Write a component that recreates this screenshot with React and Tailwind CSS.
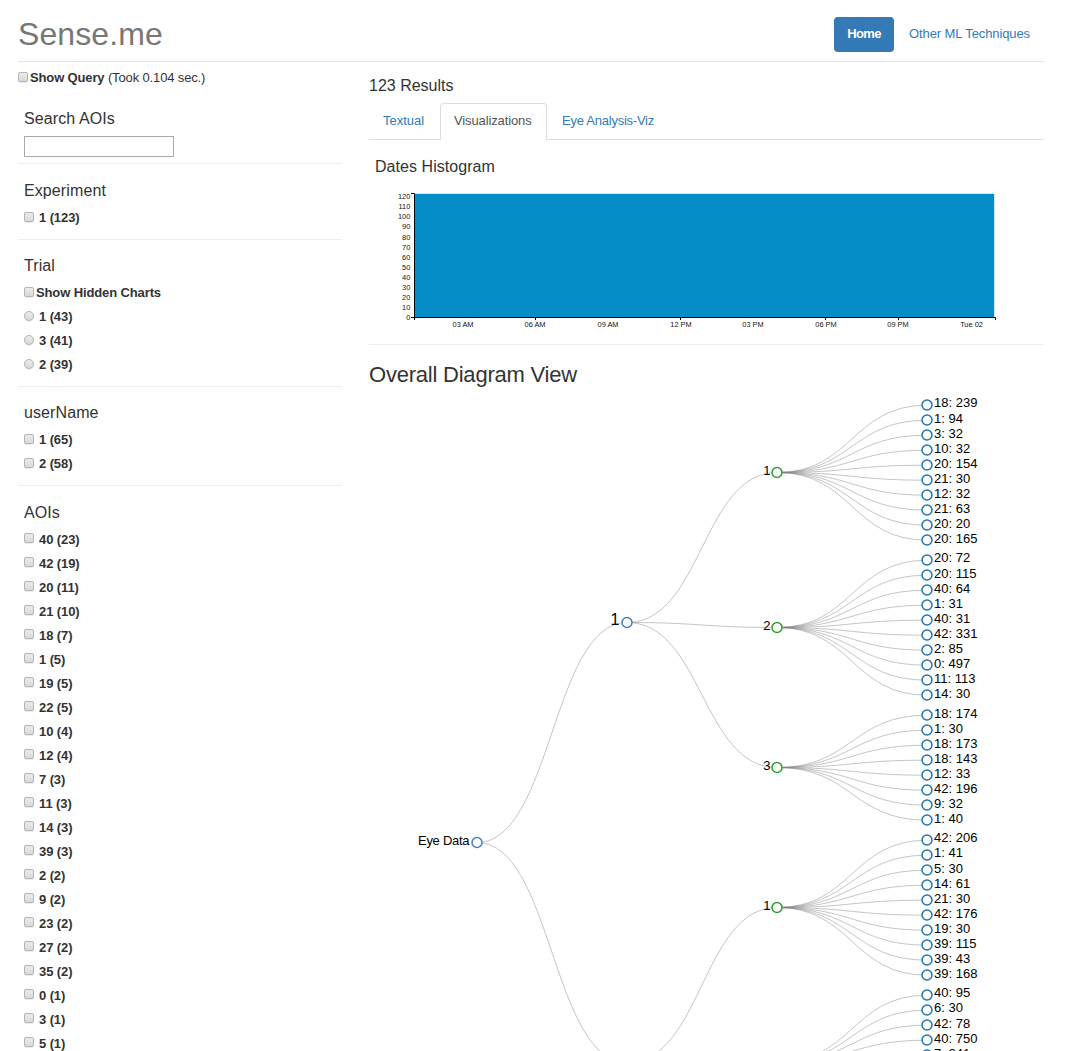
import React from "react";

const BOX =
  "w-[10px] h-[10px] shrink-0 border border-[#b4b4b4] bg-gradient-to-b from-[#ececec] to-[#d9d9d9] shadow-[0_1px_0_rgba(0,0,0,0.08)]";

function Mark({ radio }) {
  return <span className={radio ? BOX + " rounded-full" : BOX + " rounded-[2px]"} />;
}

function Option({ label, radio, labelTop }) {
  return (
    <label className="flex h-6 items-start font-bold leading-[18px] tracking-[-0.1px]">
      <span className="mt-[3px] flex"><Mark radio={radio} /></span>
      <span className={"ml-[5px] " + labelTop}>{label}</span>
    </label>
  );
}

function Heading({ children }) {
  return <h4 className="text-[16px] leading-[18px] tracking-[0.1px]">{children}</h4>;
}

function Facet({ title, items, radio, height, padding, gap = "mt-[9px]", labelTop = "mt-0", children }) {
  return (
    <section className={"border-b border-[#eeeeee] pl-[6px] " + height + " " + padding}>
      <Heading>{title}</Heading>
      <div className={gap}>
        {children}
        {items.map((t) => <Option key={t} label={t} radio={radio} labelTop={labelTop} />)}
      </div>
    </section>
  );
}

const AOIS = ["40 (23)", "42 (19)", "20 (11)", "21 (10)", "18 (7)", "1 (5)", "19 (5)", "22 (5)", "10 (4)", "12 (4)", "7 (3)", "11 (3)", "14 (3)", "39 (3)", "2 (2)", "9 (2)", "23 (2)", "27 (2)", "35 (2)", "0 (1)", "3 (1)", "5 (1)"];

function Histogram() {
  const ys = [317, 307, 297, 287, 277, 267, 257, 247, 237, 226, 216, 206, 196];
  const xs = [[463, "03 AM"], [535, "06 AM"], [608, "09 AM"], [681, "12 PM"], [753, "03 PM"], [826, "06 PM"], [898, "09 PM"], [971.5, "Tue 02"]];
  return (
    <svg className="block" width="675" height="158" viewBox="369 186 675 158" fontSize="7.4" fill="#111">
      <rect x="415" y="194" width="579" height="123" fill="#058dc7" />
      <path d="M994.5 194V317M415 193.5H994" stroke="#cfe8f4" fill="none" />
      <path d="M411 193.5H414.5V317.5H411" stroke="#000" fill="none" />
      <path d="M414.5 320V317.5H995.5V320M535.5 317V320M680.5 317V320M825.5 317V320M898.5 317V320" stroke="#000" fill="none" />
      {ys.map((y, i) => <text key={y} x="410.3" y={y + 2.6} textAnchor="end">{i * 10}</text>)}
      {xs.map(([x, t]) => <text key={t} x={x} y="327" textAnchor="middle">{t}</text>)}
    </svg>
  );
}

const GROUPS = [
  { y: 472.5, top: 405, label: "1", parent: 622.5, leaves: [["18: 239", 407], ["1: 94", 423], ["3: 32", 438], ["10: 32", 453], ["20: 154", 468], ["21: 30", 483], ["12: 32", 498], ["21: 63", 513], ["20: 20", 528], ["20: 165", 543]] },
  { y: 627.5, top: 560, label: "2", parent: 622.5, leaves: [["20: 72", 562], ["20: 115", 578], ["40: 64", 593], ["1: 31", 608], ["40: 31", 623], ["42: 331", 638], ["2: 85", 653], ["0: 497", 668], ["11: 113", 683], ["14: 30", 698]] },
  { y: 767.5, top: 715, label: "3", parent: 622.5, leaves: [["18: 174", 718], ["1: 30", 733], ["18: 173", 748], ["18: 143", 763], ["12: 33", 778], ["42: 196", 793], ["9: 32", 808], ["1: 40", 823]] },
  { y: 907.5, top: 840, label: "1", parent: 1062.5, leaves: [["42: 206", 842], ["1: 41", 857], ["5: 30", 873], ["14: 61", 888], ["21: 30", 903], ["42: 176", 918], ["19: 30", 933], ["39: 115", 948], ["39: 43", 963], ["39: 168", 978]] },
  { y: 1062.5, top: 995, parent: 1062.5, leaves: [["40: 95", 997], ["6: 30", 1012], ["42: 78", 1028], ["40: 750", 1043], ["7: 241", 1058]] },
];

const curve = (x1, y1, x2, y2) => {
  const m = (x1 + x2) / 2;
  return `M${x1} ${y1}C${m} ${y1} ${m} ${y2} ${x2} ${y2}`;
};

function Tree() {
  return (
    <svg className="block" width="675" height="661" viewBox="369 390 675 661" fontSize="13">
      <g fill="none" stroke="#808080" strokeOpacity="0.45">
        <path d={curve(477, 842.5, 627, 622.5)} />
        <path d={curve(477, 842.5, 627, 1062.5)} />
        {GROUPS.map((g) => (
          <g key={g.y}>
            <path d={curve(627, g.parent, 777, g.y)} />
            {g.leaves.map((l, i) => <path key={i} d={curve(777, g.y, 927, g.top + i * 15 + 0.2)} />)}
          </g>
        ))}
      </g>
      <g fill="#fff" strokeWidth="1.5">
        <circle cx="477" cy="842.5" r="5" stroke="#4682b4" />
        <circle cx="627" cy="622.5" r="5" stroke="#4682b4" />
        {GROUPS.map((g) => (
          <g key={g.y}>
            <circle cx="777" cy={g.y} r="5" stroke="#2ca02c" />
            {g.leaves.map((l, i) => <circle key={i} cx="927" cy={g.top + i * 15} r="5" stroke="#1f77b4" />)}
          </g>
        ))}
      </g>
      <g fill="#000">
        <text x="418" y="845" textLength="51.5">Eye Data</text>
        <text x="619.5" y="625" textAnchor="end" fontSize="16">1</text>
        {GROUPS.map((g) => (
          <g key={g.y}>
            {g.label && <text x="770.5" y={g.y + 2.5} textAnchor="end">{g.label}</text>}
            {g.leaves.map(([t, y]) => <text key={y} x="934" y={y}>{t}</text>)}
          </g>
        ))}
      </g>
    </svg>
  );
}

export default function App() {
  return (
    <div className="h-[1051px] w-full overflow-hidden bg-white pl-[18px] pr-[33px] font-['Liberation_Sans',Arial,sans-serif] text-[13px] leading-[18px] text-[#333333]">
      <header className="flex h-[62px] items-start justify-between border-b border-[#e5e5e5]">
        <h1 className="mt-[16px] text-[32px] leading-[36px] tracking-[0.1px] text-[#777777]">Sense.me</h1>
        <nav className="mt-[17px] flex">
          <a className="flex h-[35px] w-[60px] items-center justify-center rounded-[4px] bg-[#337ab7] pb-px font-bold tracking-[-0.6px] text-white"><span>Home</span></a>
          <a className="ml-px flex h-[35px] items-center px-[14px] pb-px tracking-[-0.1px] text-[#337ab7]">Other ML Techniques</a>
        </nav>
      </header>
      <div className="flex">
        <aside className="w-[324px] shrink-0">
          <div className="flex h-[39px] items-start pt-[7px]">
            <span className="mt-[3px] flex"><Mark /></span>
            <span className="ml-[2px] whitespace-pre tracking-[-0.14px]"><b>Show Query</b> (Took 0.104 sec.)</span>
          </div>
          <section className="h-[63px] border-b border-[#eeeeee] pl-[6px] pt-[9px]">
            <Heading>Search AOIs</Heading>
            <div className="mt-[8px] h-[21px] w-[150px] border border-[#a9a9a9] bg-white" />
          </section>
          <Facet title="Experiment" items={["1 (123)"]} height="h-[76px]" padding="pt-[18px]" />
          <Facet title="Trial" items={["1 (43)", "3 (41)", "2 (39)"]} radio height="h-[147px]" padding="pt-[17px]">
            <div className="flex h-6 items-start font-bold tracking-[-0.12px]">
              <span className="mt-[3px] flex"><Mark /></span>
              <span className="ml-[2px]">Show Hidden Charts</span>
            </div>
          </Facet>
          <Facet title="userName" items={["1 (65)", "2 (58)"]} height="h-[99px]" padding="pt-[17px]" />
          <Facet title="AOIs" items={AOIS} height="h-[600px]" padding="pt-[18px]" gap="mt-[8px]" labelTop="mt-px" />
        </aside>
        <main className="ml-[27px] w-[675px] shrink-0">
          <h4 className="pt-[15px] text-[16px] leading-[18px]">123 Results</h4>
          <div className="mt-[8px] flex h-[37px] border-b border-[#dddddd] leading-[34px]">
            <a className="w-[71px] pl-[14px] pt-px text-[#337ab7]">Textual</a>
            <a className="h-[37px] w-[107px] rounded-t-[4px] border border-b-0 border-[#dddddd] bg-white pl-[13px] tracking-[-0.12px] text-[#555555]">Visualizations</a>
            <a className="pl-[15px] pt-px tracking-[-0.24px] text-[#337ab7]">Eye Analysis-Viz</a>
          </div>
          <section className="h-[205px] border-b border-[#eeeeee] pt-[18px]">
            <h4 className="h-[28px] pl-[6px] text-[16px] leading-[18px] tracking-[0.05px]">Dates Histogram</h4>
            <Histogram />
          </section>
          <h3 className="h-[45px] pt-[18px] text-[22px] leading-[24px] tracking-[-0.22px]">Overall Diagram View</h3>
          <Tree />
        </main>
      </div>
    </div>
  );
}
